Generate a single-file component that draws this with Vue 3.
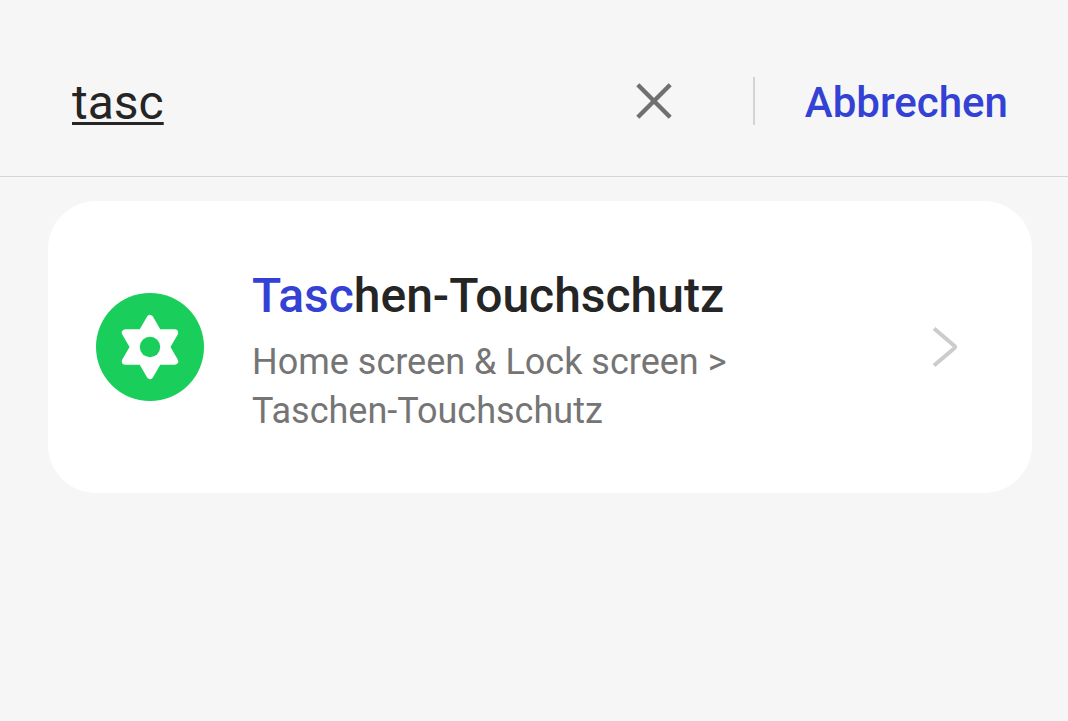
<script setup>
import { computed, ref } from 'vue'

const query = ref('tasc')
const entries = [
  {
    title: 'Taschen-Touchschutz',
    path: ['Home screen & Lock screen >', 'Taschen-Touchschutz'],
  },
]

const results = computed(() => {
  const needle = query.value.trim().toLowerCase()
  if (!needle) return []
  return entries
    .filter((e) => e.title.toLowerCase().includes(needle))
    .map((e) => {
      const start = e.title.toLowerCase().indexOf(needle)
      const end = start + needle.length
      return {
        ...e,
        before: e.title.slice(0, start),
        match: e.title.slice(start, end),
        after: e.title.slice(end),
      }
    })
})
</script>

<template>
  <div class="page">
    <header class="bar">
      <input v-model="query" class="query" type="text" aria-label="Suche" spellcheck="false" />
      <button class="clear" type="button" aria-label="Eingabe löschen" @click="query = ''">
        <svg viewBox="0 0 36 36" width="36" height="36" aria-hidden="true">
          <path d="M1.8 1.8 34.2 34.2M34.2 1.8 1.8 34.2" fill="none" stroke="#707070" stroke-width="4.4" />
        </svg>
      </button>
      <span class="divider"></span>
      <button class="cancel" type="button">Abbrechen</button>
    </header>

    <main class="results">
      <a v-for="r in results" :key="r.title" class="card" href="#">
        <svg class="icon" viewBox="0 0 108 108" width="108" height="108" aria-hidden="true">
          <circle cx="54" cy="54" r="54" fill="#19ce5a" />
          <path
            d="M54 25.5 62.23 39.75H78.68L70.45 54 78.68 68.25H62.23L54 82.5 45.77 68.25H29.32L37.55 54 29.32 39.75H45.77Z"
            fill="#fff" stroke="#fff" stroke-width="7" stroke-linejoin="round"
          />
          <circle cx="54" cy="54" r="10.2" fill="#19ce5a" />
        </svg>
        <span class="text">
          <span class="title">{{ r.before }}<span class="match">{{ r.match }}</span>{{ r.after }}</span>
          <span v-for="line in r.path" :key="line" class="path">{{ line }}</span>
        </span>
        <svg class="chevron" viewBox="0 0 26 42" width="26" height="42" aria-hidden="true">
          <path d="M2 2.5 22.6 20Q23.8 21 22.6 22L2 39.5" fill="none" stroke="#cccccc" stroke-width="4" />
        </svg>
      </a>
    </main>
  </div>
</template>

<style>
body {
  margin: 0;
  background: #f6f6f6;
}
</style>

<style scoped>
.page {
  min-height: 100vh;
  background: #f6f6f6;
  color: #252525;
  font-family: Roboto, "Liberation Sans", sans-serif;
}

.bar {
  display: flex;
  align-items: center;
  box-sizing: border-box;
  height: 177px;
  padding: 26px 60px 0 72px;
  border-bottom: 1px solid #d4d4d4;
}

.query {
  flex: 1;
  min-width: 0;
  height: 72px;
  padding: 2px 0 0;
  border: 0;
  outline: 0;
  background: transparent;
  color: inherit;
  font: 400 48px/56px Roboto, "Liberation Sans", sans-serif;
  text-decoration: underline;
  text-decoration-thickness: 3px;
  text-underline-offset: 3px;
  text-decoration-skip-ink: none;
}

.clear,
.cancel {
  padding: 0;
  border: 0;
  background: transparent;
  cursor: pointer;
}

.clear svg,
.icon,
.chevron {
  display: block;
  flex: none;
}

.divider {
  width: 2px;
  height: 48px;
  margin: 0 50px 0 81px;
  background: #d4d4d4;
}

.cancel {
  padding-top: 4px;
  color: #3341d4;
  font: 500 42px/50px Roboto, "Liberation Sans", sans-serif;
}

.results {
  padding: 24px 36px 24px 48px;
}

.card {
  display: flex;
  align-items: center;
  gap: 48px;
  padding: 57px 74px 57px 48px;
  border-radius: 48px;
  background: #fff;
  color: inherit;
  text-decoration: none;
}

.text {
  flex: 1;
  min-width: 0;
  padding-top: 8px;
}

.title,
.path {
  display: block;
}

.title {
  margin-bottom: 12px;
  font-size: 48px;
  font-weight: 500;
  line-height: 60px;
}

.match {
  color: #3341d4;
}

.path {
  color: #757575;
  font-size: 36px;
  line-height: 49px;
}
</style>
